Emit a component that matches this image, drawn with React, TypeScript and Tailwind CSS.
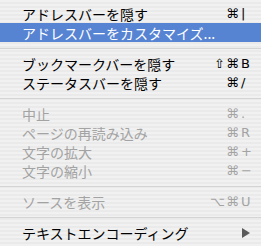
type Item =
  | { kind: 'sep' }
  | { kind: 'item'; label: string; mods?: string; key?: string; disabled?: boolean; active?: boolean; submenu?: boolean };

const items: Item[] = [
  { kind: 'item', label: 'アドレスバーを隠す', mods: '⌘', key: '|' },
  { kind: 'item', label: 'アドレスバーをカスタマイズ...', active: true },
  { kind: 'sep' },
  { kind: 'item', label: 'ブックマークバーを隠す', mods: '⇧⌘', key: 'B' },
  { kind: 'item', label: 'ステータスバーを隠す', mods: '⌘', key: '/' },
  { kind: 'sep' },
  { kind: 'item', label: '中止', mods: '⌘', key: '.', disabled: true },
  { kind: 'item', label: 'ページの再読み込み', mods: '⌘', key: 'R', disabled: true },
  { kind: 'item', label: '文字の拡大', mods: '⌘', key: '+', disabled: true },
  { kind: 'item', label: '文字の縮小', mods: '⌘', key: '−', disabled: true },
  { kind: 'sep' },
  { kind: 'item', label: 'ソースを表示', mods: '⌥⌘', key: 'U', disabled: true },
  { kind: 'sep' },
  { kind: 'item', label: 'テキストエンコーディング', submenu: true },
];

export default function App() {
  return (
    <div className="w-[261px] h-[246px] overflow-hidden pt-[4px] bg-[repeating-linear-gradient(180deg,#f1f1f1_0px,#f1f1f1_2px,#eaeaea_2px,#eaeaea_4px)] font-['Noto_Sans_CJK_JP','Liberation_Sans',sans-serif] text-[14px] select-none">
      {items.map((item, i) =>
        item.kind === 'sep' ? (
          <div key={i} className="h-[12px] flex items-center">
            <div className="w-full h-px bg-[#d4d4d4]" />
          </div>
        ) : (
          <div
            key={i}
            className={`h-[19px] flex items-center pl-[22px] pr-[11px] leading-none ${
              item.active ? 'bg-[#5783d3] text-white' : item.disabled ? 'text-[#a3a3a3]' : 'text-black'
            }`}
          >
            <span className="flex-1 whitespace-nowrap">{item.label}</span>
            {item.mods && (
              <span className="flex items-center font-['DejaVu_Sans',sans-serif] text-[13px]">
                <span className="text-right tracking-[1px]">{item.mods}</span>
                <span className="w-[10px] pl-[1px] text-left">{item.key}</span>
              </span>
            )}
            {item.submenu && (
              <svg width="8" height="10" viewBox="0 0 8 10" className="mr-0">
                <path d="M0 0 L8 5 L0 10 Z" fill="#5a5a5a" />
              </svg>
            )}
          </div>
        )
      )}
    </div>
  );
}
